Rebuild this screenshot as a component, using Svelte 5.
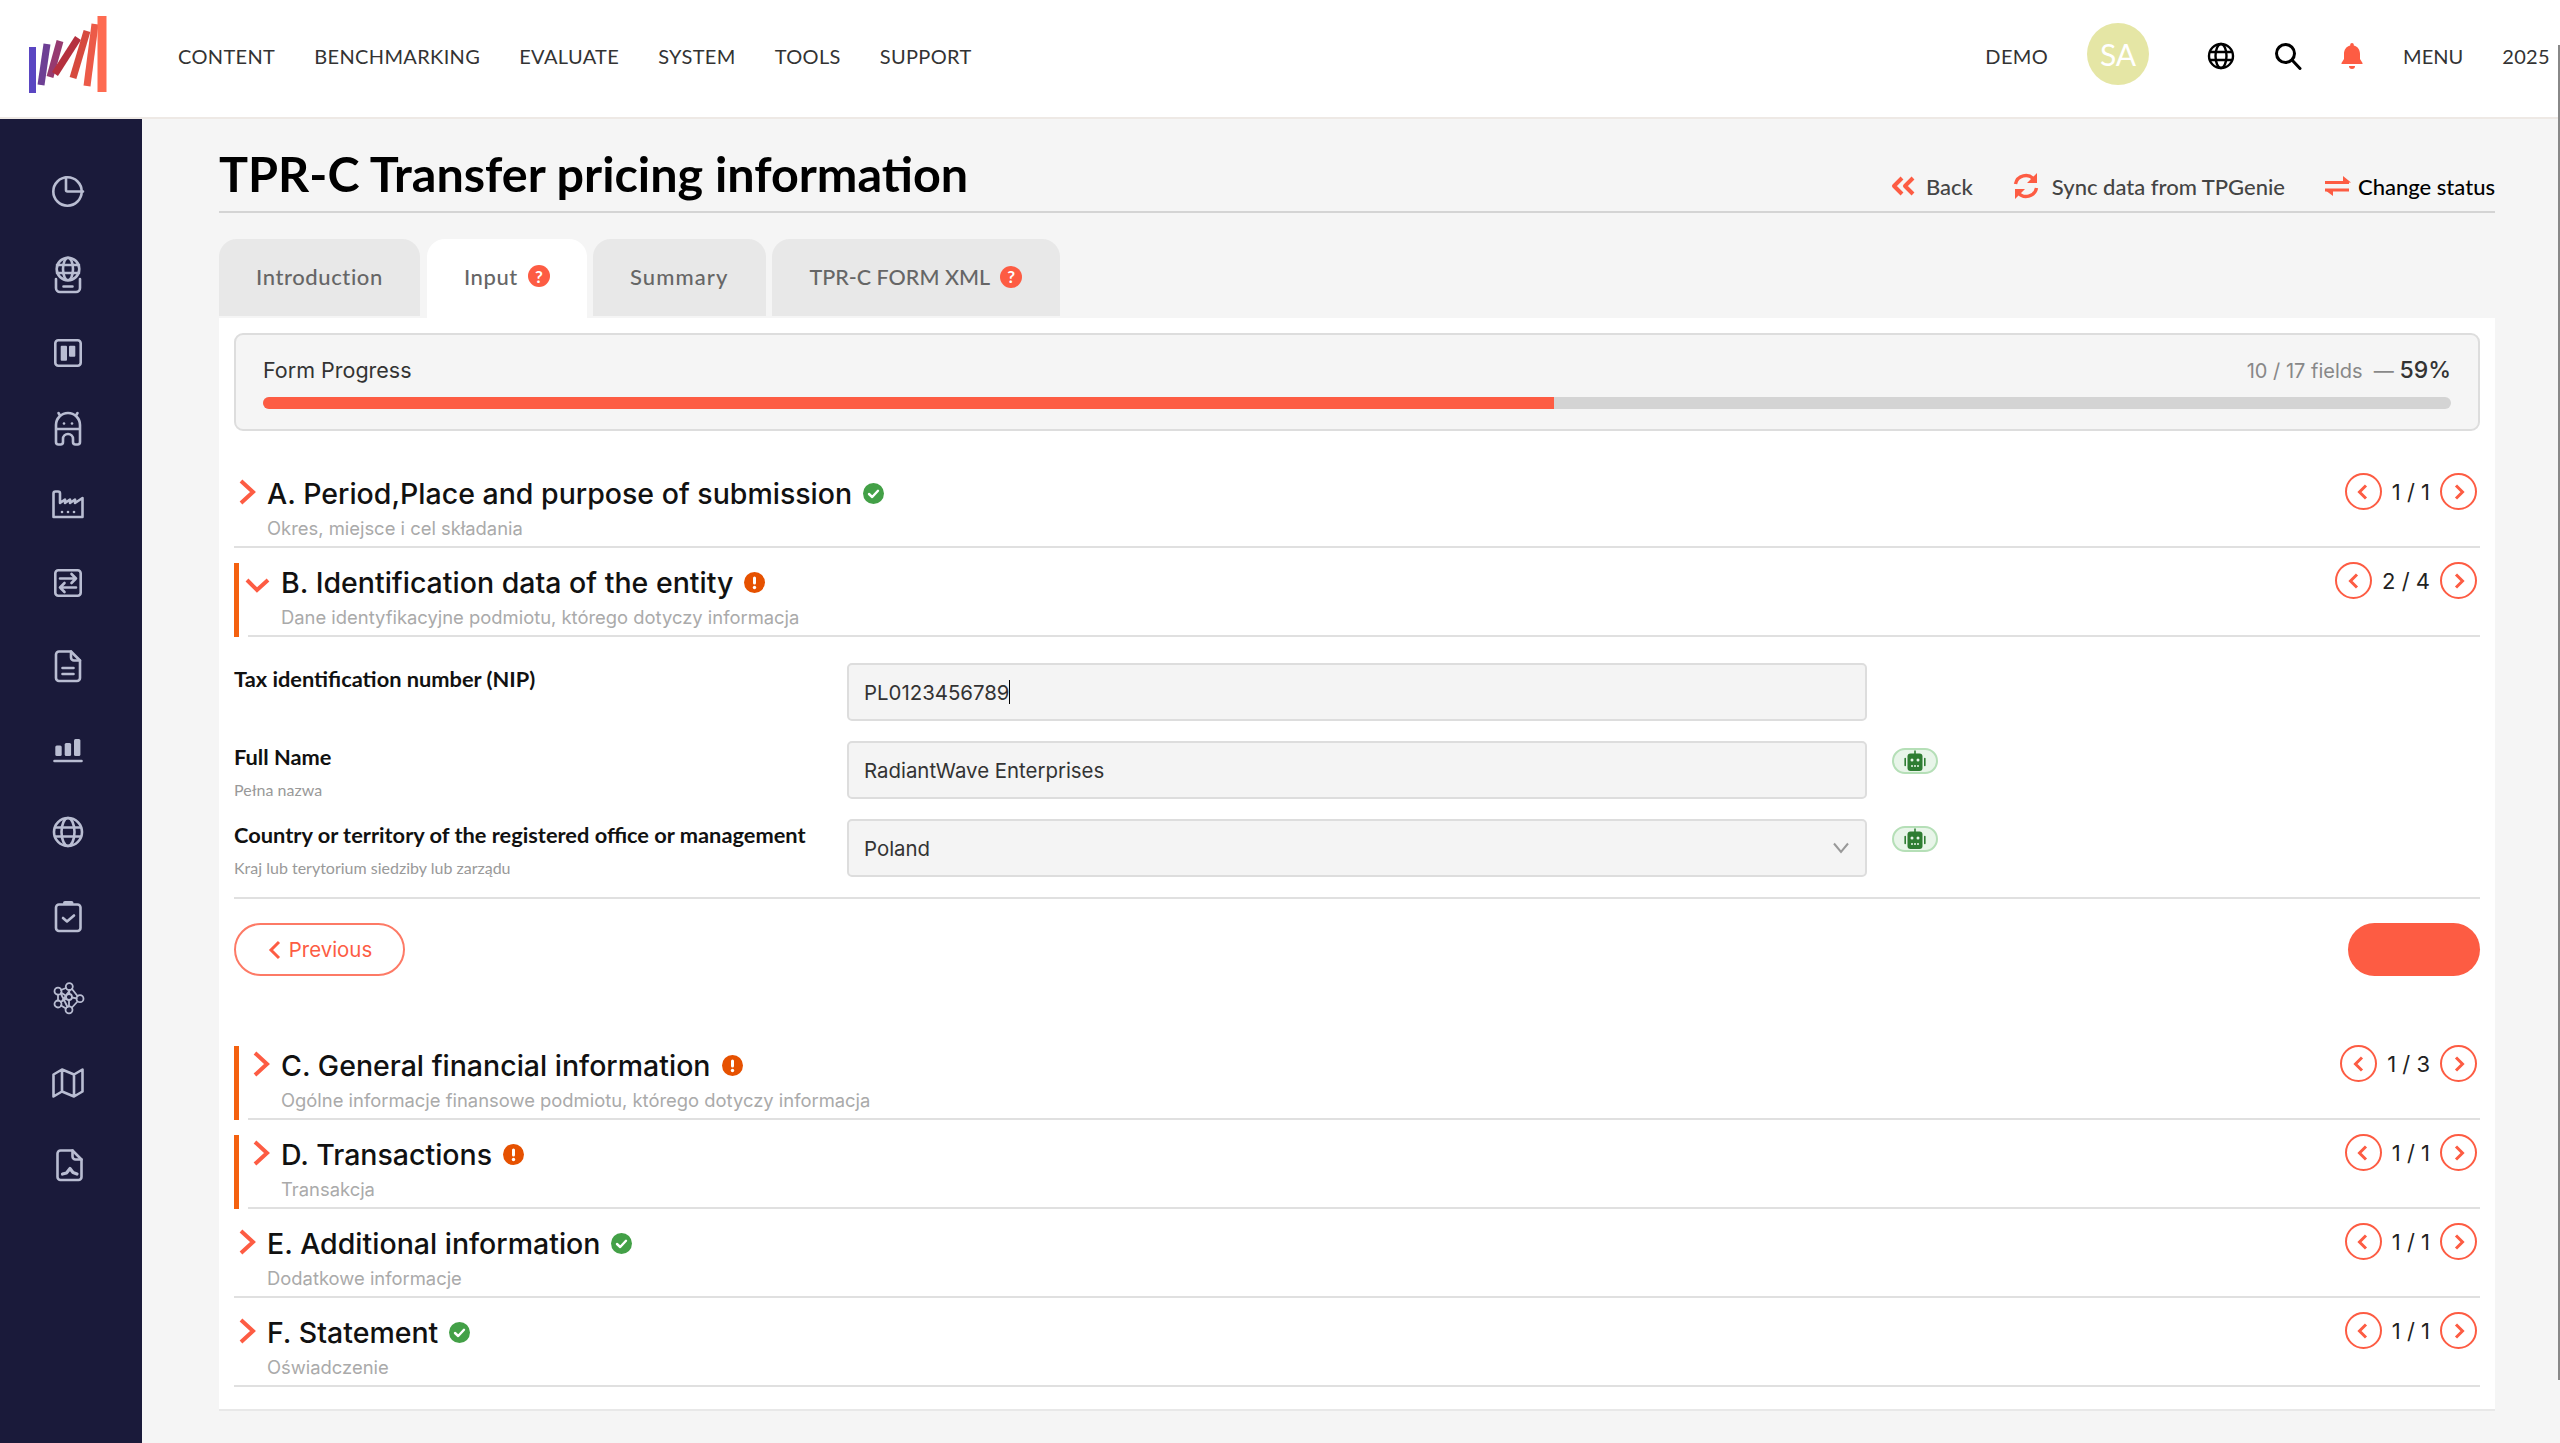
<script>
	const nav = ['CONTENT', 'BENCHMARKING', 'EVALUATE', 'SYSTEM', 'TOOLS', 'SUPPORT'];

	const sideIcons = [
		'<circle cx="19.5" cy="20.5" r="14.2"/><path d="M18 6.5V19a1.5 1.5 0 0 0 1.5 1.5H35"/>',
		'<circle cx="20" cy="14" r="11.3"/><ellipse cx="20" cy="14" rx="5" ry="11.3"/><path d="M9 10h22M9 18h22M8 24v9a4 4 0 0 0 4 4h16a4 4 0 0 0 4-4v-9M15.500 31.500h9"/>',
		'<rect x="7.300" y="7.300" width="25.400" height="25.400" rx="3"/><rect x="12.700" y="12.700" width="6.300" height="15" rx="1" fill="currentColor" stroke="none"/><rect x="21" y="12.700" width="6.300" height="11" rx="1" fill="currentColor" stroke="none"/>',
		'<path d="M8 33V16a12 12 0 0 1 24 0v17a2.500 2.500 0 0 1-2.500 2.500h-2a2.500 2.500 0 0 1-2.500-2.500v-3a5 5 0 0 0-10 0v3a2.500 2.500 0 0 1-2.500 2.500h-2A2.500 2.500 0 0 1 8 33ZM8 20h24M12 6.500 10.500 4M28 6.500 29.500 4"/><circle cx="16" cy="14.500" r="1.300" fill="currentColor" stroke="none"/><circle cx="24" cy="14.500" r="1.300" fill="currentColor" stroke="none"/>',
		'<path d="M5.500 33V9.500a2 2 0 0 1 2-2H10a2 2 0 0 1 2 2V19l5-3.500V19l5-3.500V19l5-3.500V19l7.500-5V33Z"/><circle cx="14" cy="28" r="1.300" fill="currentColor" stroke="none"/><circle cx="20" cy="28" r="1.300" fill="currentColor" stroke="none"/><circle cx="26" cy="28" r="1.300" fill="currentColor" stroke="none"/>',
		'<rect x="7.300" y="7.300" width="25.400" height="25.400" rx="3"/><path d="M12 15.500h16M23.500 11l4.500 4.500-4.500 4.500M28 24.500H12M16.500 20 12 24.500l4.500 4.500"/>',
		'<path d="M11 5.500h12l9 9V32a3 3 0 0 1-3 3H11a3 3 0 0 1-3-3V8.500a3 3 0 0 1 3-3Z"/><path d="M23 5.500v6a3 3 0 0 0 3 3h6M14.500 22h11M14.500 28h11"/>',
		'<rect x="7.300" y="14.500" width="6.400" height="10.500" rx="1.500" fill="currentColor" stroke="none"/><rect x="16.700" y="12" width="6.400" height="13" rx="1.500" fill="currentColor" stroke="none"/><rect x="26" y="8" width="6.400" height="17" rx="1.500" fill="currentColor" stroke="none"/><path d="M6.500 30h27"/>',
		'<circle cx="20" cy="20" r="14"/><ellipse cx="20" cy="20" rx="6.500" ry="14"/><path d="M7 15.500h26M7 24.500h26"/>',
		'<rect x="8" y="8.500" width="24.500" height="26.500" rx="3"/><rect x="15" y="5" width="10.500" height="4" rx="2" fill="currentColor" stroke="none"/><path d="M15 22l4 3.500 7-6"/>',
		'<g stroke-width="1.800"><circle cx="10" cy="13.200" r="3.500"/><circle cx="21.300" cy="8.600" r="3.500"/><circle cx="32" cy="20.700" r="3.500"/><circle cx="21" cy="31.800" r="3.500"/><circle cx="10" cy="26" r="3.500"/><circle cx="21" cy="19" r="3"/><path d="M13 12l5-2M24 11l5.500 7M29.500 23.500 24 29.500M13 27.500l5 3M10 16.700v5.800M21.300 12v4M21 22v6.300M13.300 14.800l4.700 3M12.800 24l5.500-3.500M24 19.500l4.600.9M13 16l6.500 13M14 23l8-11"/></g>',
		'<path d="M5.500 11.500 14 6.500l12 5 8.500-5V28.500l-8.500 5-12-5-8.500 5ZM14 6.500v22M26 11.500v22"/>',
		'<g transform="translate(1.500 0)"><path d="M11 5.500h12l9 9V32a3 3 0 0 1-3 3H11a3 3 0 0 1-3-3V8.500a3 3 0 0 1 3-3Z"/><path d="M23 5.500v6a3 3 0 0 0 3 3h6"/><path d="M13 29l4-1 3.500-4.500 3 4 4 1.500" stroke-width="3.200"/></g>'
	];

	const above = [{ title: 'A. Period,Place and purpose of submission', sub: 'Okres, miejsce i cel składania', ok: true, page: '1 / 1' }];
	const open = {
		title: 'B. Identification data of the entity',
		sub: 'Dane identyfikacyjne podmiotu, którego dotyczy informacja',
		ok: false,
		page: '2 / 4',
		open: true
	};
	const below = [
		{ title: 'C. General financial information', sub: 'Ogólne informacje finansowe podmiotu, którego dotyczy informacja', ok: false, page: '1 / 3' },
		{ title: 'D. Transactions', sub: 'Transakcja', ok: false, page: '1 / 1' },
		{ title: 'E. Additional information', sub: 'Dodatkowe informacje', ok: true, page: '1 / 1' },
		{ title: 'F. Statement', sub: 'Oświadczenie', ok: true, page: '1 / 1' }
	];
</script>

{#snippet question()}
	<span class="q">?</span>
{/snippet}

{#snippet robot()}
	<span class="bot">
		<svg width="24" height="22" viewBox="0 0 24 22">
			<path d="M11.200 0.500h1.600v3.500h-1.600z" fill="#2e7d32" />
			<rect x="4.500" y="3.500" width="15" height="17.500" rx="3" fill="#2e7d32" />
			<path d="M2.200 8.500v7M21.800 8.500v7" stroke="#2e7d32" stroke-width="1.600" stroke-linecap="round" />
			<circle cx="9" cy="10" r="1.500" fill="#e8f5e9" />
			<circle cx="15" cy="10" r="1.500" fill="#e8f5e9" />
			<path d="M8 16h8" stroke="#e8f5e9" stroke-width="1.600" stroke-dasharray="2 1" />
		</svg>
	</span>
{/snippet}

{#snippet head(s)}
	<div class="sec" class:warn={!s.ok}>
		{#if !s.ok}<span class="bar"></span>{/if}
		<div class="head">
			<span class="chev">
				{#if s.open}
					<svg width="26" height="26" viewBox="0 0 26 26"><path d="M-1 12 9 22 20 12" /></svg>
				{:else}
					<svg width="26" height="26" viewBox="0 0 26 26"><path d="M7 2 19 13 7 24" /></svg>
				{/if}
			</span>
			<div class="titles">
				<div class="title">
					{s.title}
					{#if s.ok}
						<svg width="21" height="21" viewBox="0 0 21 21">
							<circle cx="10.500" cy="10.500" r="10.500" fill="#43a047" />
							<path d="M6 11l3.200 3L15 7.800" fill="none" stroke="#fff" stroke-width="2.400" stroke-linecap="round" stroke-linejoin="round" />
						</svg>
					{:else}
						<svg width="21" height="21" viewBox="0 0 21 21">
							<circle cx="10.500" cy="10.500" r="10.500" fill="#e65100" />
							<rect x="9" y="4.500" width="3" height="8" rx="1.500" fill="#fff" />
							<circle cx="10.500" cy="15.500" r="1.700" fill="#fff" />
						</svg>
					{/if}
				</div>
				<div class="sub">{s.sub}</div>
			</div>
			<div class="pager">
				<span class="circ">
					<svg width="14" height="16" viewBox="0 0 14 16"><path d="M10 1.500 3.500 8l6.500 6.500" /></svg>
				</span>
				<span>{s.page}</span>
				<span class="circ">
					<svg width="14" height="16" viewBox="0 0 14 16"><path d="M4 1.500 10.500 8 4 14.500" /></svg>
				</span>
			</div>
		</div>
	</div>
{/snippet}

<div class="app">
	<header>
		<svg class="logo" width="80" height="80" viewBox="0 0 80 80">
			<g fill="none" stroke-width="7">
				<path d="M3.500 31v46" stroke="#5a46c2" />
				<path d="M18 28 12 69" stroke="#6d3f94" />
				<path d="M31 25 21 61" stroke="#963a70" />
				<path d="M49 22 26 58" stroke="#b5303e" />
				<path d="M58 15 44 62" stroke="#d64a3e" />
				<path d="M66 8 58 70" stroke="#ec5a48" />
				<path d="M73 0v76" stroke="#fe6b51" stroke-width="9" />
			</g>
		</svg>
		<nav>
			{#each nav as item}
				<span>{item}</span>
			{/each}
		</nav>
		<div class="right">
			<span>DEMO</span>
			<span class="avatar">SA</span>
			<svg class="ico-globe" width="28" height="28" viewBox="0 0 28 28" fill="none" stroke="#000" stroke-width="2.400">
				<circle cx="14" cy="14" r="12" />
				<ellipse cx="14" cy="14" rx="5.500" ry="12" />
				<path d="M3 10h22M3 18h22" />
			</svg>
			<svg class="ico-search" width="28" height="28" viewBox="0 0 28 28" fill="none" stroke="#000" stroke-width="3">
				<circle cx="11.500" cy="11.500" r="9" />
				<path d="M18 18l8 8.500" stroke-linecap="round" />
			</svg>
			<svg class="ico-bell" width="22" height="28" viewBox="0 0 22 28" fill="#fd5c43">
				<path d="M11 1a1.800 1.800 0 0 1 1.800 1.800v.7C17 4.500 19 8 19 12v5l2.500 4v1H.500v-1L3 17v-5c0-4 2-7.500 6.200-8.500v-.7A1.800 1.800 0 0 1 11 1Z" />
				<path d="M8 24h6a3 3 0 0 1-6 0Z" />
			</svg>
			<span class="menu">MENU</span>
			<span class="year">2025</span>
		</div>
	</header>

	<div class="body">
		<aside>
			{#each sideIcons as icon}
				<span class="side-ico">
					<svg width="40" height="40" viewBox="0 0 40 40" fill="none" stroke="currentColor" stroke-width="2.600" stroke-linecap="round" stroke-linejoin="round">
						{@html icon}
					</svg>
				</span>
			{/each}
		</aside>

		<main>
			<div class="page-head">
				<h1>TPR-C Transfer pricing information</h1>
				<div class="actions">
					<span class="action">
						<svg width="26" height="20" viewBox="0 0 26 20" fill="none" stroke="#fd5c43" stroke-width="4" stroke-linejoin="round"><path d="M11 2 3 10l8 8M22 2l-8 8 8 8" /></svg>
						Back
					</span>
					<span class="action sync">
						<svg width="26" height="26" viewBox="0 0 26 26" fill="none" stroke="#fd5c43" stroke-width="3.400">
							<path d="M2.500 11A10.500 10.500 0 0 1 21 6.500" />
							<path d="M23.500 15A10.500 10.500 0 0 1 5 19.500" />
							<path d="M24 0v10h-10ZM2 26V16h10Z" fill="#fd5c43" stroke="none" />
						</svg>
						Sync data from TPGenie
					</span>
					<span class="action change">
						<svg width="26" height="20" viewBox="0 0 26 20" fill="none" stroke="#fd5c43" stroke-width="3">
							<path d="M0 6.500h24M0 14h24" />
							<path d="M18 0l8 6.500-8 .5ZM8 20 0 14l8-.5Z" fill="#fd5c43" stroke="none" />
						</svg>
						Change status
					</span>
				</div>
			</div>

			<div class="tabs">
				<span class="tab">Introduction</span>
				<span class="tab active">Input {@render question()}</span>
				<span class="tab summary">Summary</span>
				<span class="tab xml">TPR-C FORM XML {@render question()}</span>
			</div>

			<div class="card">
				<div class="progress">
					<div class="progress-top">
						<span>Form Progress</span>
						<span class="count">10 / 17 fields &nbsp;— <b>59%</b></span>
					</div>
					<div class="track"><div class="fill" style="width: 59%"></div></div>
				</div>

				{#each above as s}
					{@render head(s)}
				{/each}

				{@render head(open)}

				<div class="form">
					<div class="label"><b>Tax identification number (NIP)</b></div>
					<div class="field">PL0123456789<i class="caret"></i></div>
					<div></div>

					<div class="label"><b>Full Name</b><small>Pełna nazwa</small></div>
					<div class="field">RadiantWave Enterprises</div>
					{@render robot()}

					<div class="label"><b>Country or territory of the registered office or management</b><small>Kraj lub terytorium siedziby lub zarządu</small></div>
					<div class="field select">
						Poland
						<svg width="18" height="12" viewBox="0 0 18 12" fill="none" stroke="#999" stroke-width="2"><path d="M2 1.500 9 10l7-8.500" /></svg>
					</div>
					{@render robot()}
				</div>

				<div class="buttons">
					<span class="prev">
						<svg width="14" height="20" viewBox="0 0 14 20" fill="none" stroke="#fd5c43" stroke-width="3"><path d="M12 2 4 10l8 8" /></svg>
						Previous
					</span>
					<span class="next"></span>
				</div>

				{#each below as s}
					{@render head(s)}
				{/each}
			</div>
		</main>
	</div>

	<span class="scrollbar"></span>
</div>

<style>
	:global(body) {
		margin: 0;
		background: #f5f5f5;
	}
	.app {
		position: relative;
		height: 1443px;
		overflow: hidden;
		font-family: Lato, 'Open Sans', sans-serif;
		color: #222;
	}

	header {
		display: flex;
		align-items: center;
		box-sizing: border-box;
		height: 119px;
		padding: 0 0 5px 29px;
		background: #fff;
		border-bottom: 2px solid #eee9e5;
	}
	.logo {
		margin-right: 69px;
		overflow: visible;
	}
	nav {
		display: flex;
		gap: 39px;
		font-size: 20px;
		letter-spacing: 0.35px;
		color: #333;
	}
	.right {
		display: flex;
		align-items: center;
		margin-left: auto;
		font-size: 20px;
		letter-spacing: 0.35px;
		color: #333;
	}
	.avatar {
		display: flex;
		align-items: center;
		justify-content: center;
		width: 62px;
		height: 62px;
		margin: -5px 0 0 39px;
		border-radius: 50%;
		background: #e5e6a5;
		color: #fff;
		font-size: 30px;
		letter-spacing: 0;
	}
	.ico-globe {
		margin-left: 58px;
	}
	.ico-search {
		margin-left: 39px;
	}
	.ico-bell {
		margin-left: 39px;
	}
	.menu {
		margin-left: 40px;
		letter-spacing: 0;
	}
	.year {
		margin: 0 10px 0 39px;
	}

	.body {
		display: flex;
		height: 1324px;
	}
	aside {
		flex: none;
		display: grid;
		grid-template-rows: 84px 84px 72px 80px 70px 88px 78px 92px 70px 98px 66px 104px 60px;
		justify-items: center;
		align-items: center;
		box-sizing: border-box;
		width: 142px;
		padding: 30px 6px 0 0;
		background: #1a1a3a;
		color: #b9bdd2;
	}
	.side-ico {
		display: flex;
	}

	main {
		flex: 1;
		min-width: 0;
		padding: 0 65px 0 77px;
	}
	.page-head {
		display: flex;
		justify-content: space-between;
		align-items: flex-end;
		height: 92px;
		border-bottom: 2px solid #d4d4d4;
	}
	h1 {
		margin: 0 0 2px;
		font-size: 48.500px;
		font-weight: 700;
		line-height: 72px;
		color: #000;
	}
	.actions {
		display: flex;
		align-items: center;
		gap: 40px;
		height: 50px;
		font-size: 22px;
		color: #444;
	}
	.action {
		display: flex;
		align-items: center;
		gap: 9px;
		font-weight: 500;
	}
	.sync {
		gap: 13px;
	}
	.change {
		gap: 7px;
		color: #000;
	}

	.tabs {
		display: flex;
		align-items: flex-start;
		gap: 6px;
		margin-top: 26px;
	}
	.tab {
		display: flex;
		align-items: center;
		gap: 10px;
		box-sizing: border-box;
		height: 77px;
		padding: 0 37px 3px;
		border-radius: 18px 18px 0 0;
		background: #e8e8e8;
		font-size: 22px;
		font-weight: 500;
		letter-spacing: 0.6px;
		color: #666;
	}
	.tab.active {
		height: 79px;
		margin-left: 1px;
		padding-bottom: 5px;
		background: #fff;
	}
	.tab.summary {
		letter-spacing: 1.1px;
	}
	.tab.xml {
		letter-spacing: 0;
		font-size: 21.500px;
		padding: 0 38px 2px;
	}
	.q {
		display: flex;
		align-items: center;
		justify-content: center;
		width: 22px;
		height: 22px;
		border-radius: 50%;
		background: #fd5c43;
		color: #fff;
		font-size: 17px;
		font-weight: 700;
		letter-spacing: 0;
	}

	.card {
		box-sizing: border-box;
		height: 1091px;
		padding: 15px;
		background: #fff;
		box-shadow: 0 2px 0 #e8e8e8;
		font-family: Inter, sans-serif;
	}
	.progress {
		box-sizing: border-box;
		height: 98px;
		margin-bottom: 43px;
		padding: 20px 27px;
		border: 2px solid #ddd;
		border-radius: 9px;
		background: #f5f5f5;
	}
	.progress-top {
		display: flex;
		justify-content: space-between;
		align-items: center;
		height: 30px;
		font-size: 21.500px;
		color: #333;
	}
	.count {
		font-size: 20px;
		color: #888;
	}
	.count b {
		font-size: 23px;
		font-weight: 500;
		color: #333;
	}
	.track {
		height: 12px;
		margin-top: 12px;
		border-radius: 6px;
		background: #d4d4d4;
		overflow: hidden;
	}
	.fill {
		height: 100%;
		background: #fd5c43;
	}

	.sec {
		display: flex;
		margin-bottom: 15px;
	}
	.bar {
		flex: none;
		width: 5px;
		height: 74px;
		margin-right: 9px;
		background: #f4610f;
	}
	.head {
		flex: 1;
		display: flex;
		box-sizing: border-box;
		height: 74px;
		padding-right: 3px;
		border-bottom: 2px solid #e0e0e0;
	}
	.chev {
		flex: none;
		width: 33px;
		padding-top: 5px;
	}
	.chev svg {
		display: block;
		overflow: visible;
		fill: none;
		stroke: #fd5c43;
		stroke-width: 4;
	}
	.title {
		display: flex;
		align-items: center;
		gap: 11px;
		height: 38px;
		font-size: 28.500px;
		font-weight: 500;
		color: #111;
	}
	.sub {
		margin-top: 5px;
		font-size: 18.400px;
		line-height: 22px;
		color: #aaa;
	}
	.pager {
		display: flex;
		align-items: center;
		gap: 10px;
		height: 37px;
		margin: -1px 0 0 auto;
		font-size: 22px;
		color: #222;
	}
	.circ {
		display: flex;
		align-items: center;
		justify-content: center;
		box-sizing: border-box;
		width: 37px;
		height: 37px;
		border: 2px solid #fd5c43;
		border-radius: 50%;
	}
	.circ svg {
		fill: none;
		stroke: #fd5c43;
		stroke-width: 3;
	}

	.form {
		display: grid;
		grid-template-columns: 613px 1020px 1fr;
		grid-auto-rows: 58px;
		row-gap: 20px;
		padding: 11px 0 20px;
		border-bottom: 2px solid #e0e0e0;
		align-items: start;
	}
	.label {
		font-family: Lato, sans-serif;
		color: #111;
	}
	.label b {
		display: block;
		margin-top: 2px;
		font-size: 21.800px;
		font-weight: 700;
		line-height: 28px;
	}
	.label small {
		display: block;
		margin-top: 9px;
		font-size: 16px;
		line-height: 20px;
		color: #999;
	}
	.field {
		display: flex;
		align-items: center;
		box-sizing: border-box;
		height: 58px;
		padding: 0 15px;
		border: 2px solid #ddd;
		border-radius: 5px;
		background: #f4f4f4;
		font-size: 20.400px;
		color: #333;
	}
	.caret {
		width: 1px;
		height: 24px;
		background: #000;
	}
	.select {
		justify-content: space-between;
	}
	.bot {
		display: flex;
		align-items: center;
		justify-content: center;
		box-sizing: border-box;
		width: 46px;
		height: 26px;
		margin: 7px 0 0 25px;
		border: 2px solid #b5dfb7;
		border-radius: 13px;
		background: #e8f5e9;
	}

	.buttons {
		display: flex;
		justify-content: space-between;
		margin: 24px 0 70px;
	}
	.prev {
		display: flex;
		align-items: center;
		justify-content: center;
		gap: 8px;
		box-sizing: border-box;
		width: 171px;
		height: 53px;
		border: 2px solid #fd7a66;
		border-radius: 27px;
		font-size: 20.400px;
		color: #fd5c43;
	}
	.next {
		width: 132px;
		height: 53px;
		border-radius: 27px;
		background: #fd5c43;
	}

	.scrollbar {
		position: absolute;
		top: 45px;
		right: 0;
		width: 2px;
		height: 1335px;
		background: #888;
	}
</style>
